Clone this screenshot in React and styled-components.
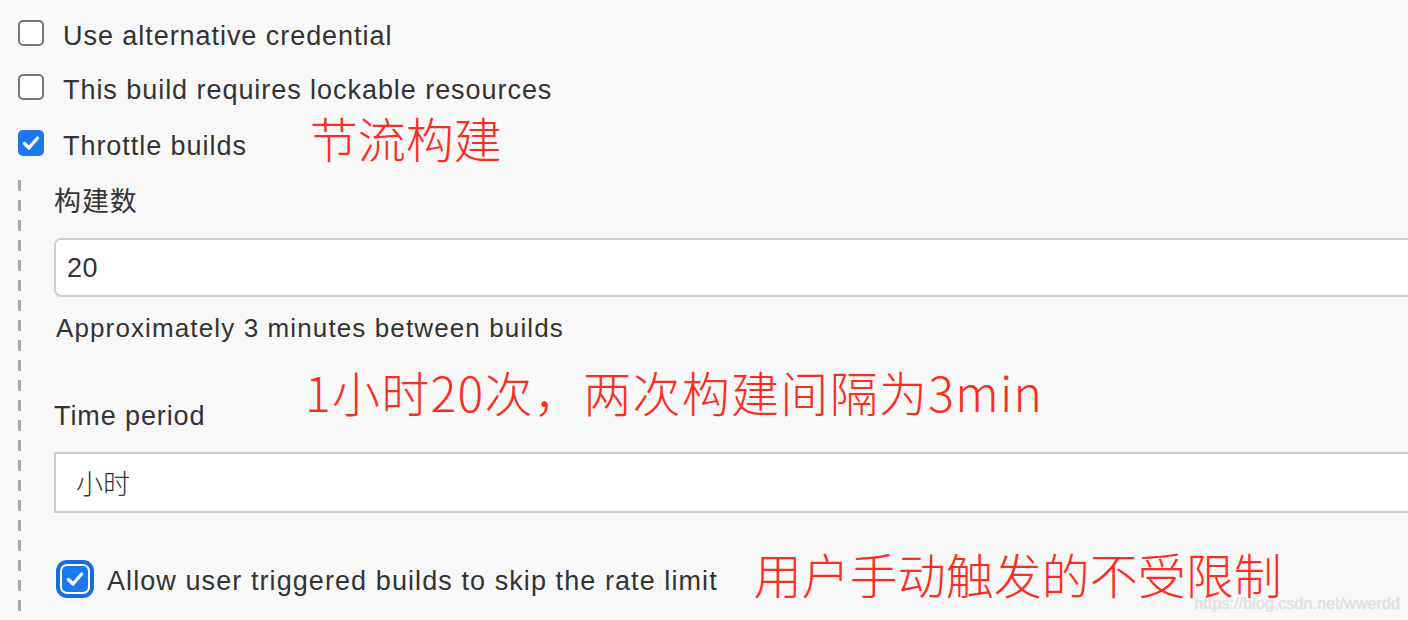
import styled, { createGlobalStyle } from 'styled-components'

const GlobalStyle = createGlobalStyle`
    html, body {
        margin: 0;
        padding: 0;
        background-color: #f8f8f8;
        overflow: hidden;
    }
    body {
        font-family: "Liberation Sans", "Noto Sans CJK SC", sans-serif;
        color: #333;
    }
`;

const Page = styled.div`
    position: relative;
    width: 1408px;
    height: 620px;
    padding: 20px 0 0 18px;
    box-sizing: border-box;
    overflow: hidden;
`;

const CheckList = styled.div`
    display: flex;
    flex-direction: column;
    gap: 28px;
`;

const CheckRow = styled.label`
    display: flex;
    align-items: center;
    gap: 19px;
    height: 26px;
    margin-top: ${props => props.$offset || 0}px;
    margin-left: ${props => props.$indent || 0}px;
    font-size: 27px;
    letter-spacing: ${props => props.$spacing || 0.95}px;
    line-height: 26px;
    white-space: nowrap;
`;

const RowText = styled.span`
    padding-top: ${props => props.$drop || 6}px;
`;

const Box = styled.span`
    flex: none;
    width: 26px;
    height: 26px;
    box-sizing: border-box;
    border-radius: 5px;
    border: 2px solid ${props => props.$checked ? '#1b78f2' : '#777'};
    background-color: ${props => props.$checked ? '#1b78f2' : '#fff'};
    display: flex;
    align-items: center;
    justify-content: center;
    box-shadow: ${props => props.$focus ? '0 0 0 2px #fff, 0 0 0 6px #1a6be0' : 'none'};

    svg {
        width: 20px;
        height: 20px;
    }
`;

const Note = styled.span`
    font-family: "Noto Sans CJK SC", sans-serif;
    font-weight: 300;
    font-size: 48px;
    line-height: 48px;
    letter-spacing: ${props => props.$spacing || 0}px;
    color: #fc2c1e;
    margin: -12px 0 0 ${props => props.$gap || 0}px;
    white-space: nowrap;
`;

const Nested = styled.div`
    margin-top: 24px;
    padding: 6px 0 40px 36px;
    background-image: linear-gradient(to bottom, #a9a9a9 0 11px, transparent 11px 20px);
    background-size: 3px 20px;
    background-repeat: repeat-y;
    background-position: 0 0;
`;

const Field = styled.div`
    position: relative;
    display: flex;
    flex-direction: column;
    margin-top: ${props => props.$top || 0}px;
`;

const Label = styled.div`
    font-size: 27px;
    letter-spacing: 0.9px;
    line-height: 32px;
    color: #333;
`;

const TextInput = styled.div`
    width: 1400px;
    height: 59px;
    margin-top: 20px;
    box-sizing: border-box;
    border: 2px solid #cfcfcf;
    border-radius: 7px;
    background-color: #fff;
    padding: 2px 0 0 11px;
    display: flex;
    align-items: center;
    font-size: 27px;
    letter-spacing: 0.5px;
`;

const Select = styled.div`
    width: 1400px;
    height: 61px;
    margin-top: 20px;
    box-sizing: border-box;
    border: 2px solid #cdcdcd;
    background-color: #fff;
    padding-left: 20px;
    display: flex;
    align-items: center;
    font-size: 27px;
    font-family: "Noto Sans CJK SC", sans-serif;
    font-weight: 300;
    color: #333;
`;

const Help = styled.div`
    margin-top: 15px;
    font-size: 26px;
    letter-spacing: 1.12px;
    line-height: 32px;
    margin-left: 2px;
`;

const FloatNote = styled(Note)`
    position: absolute;
    left: 251px;
    top: -33px;
    margin: 0;
`;

const Watermark = styled.div`
    position: absolute;
    right: 8px;
    bottom: 7px;
    font-size: 16px;
    color: #e2e2e2;
    text-shadow: 0 0 1px #d6d6d6;
    letter-spacing: 0.1px;
`;

const Tick = () => (
    <svg viewBox="0 0 20 20">
        <path d="M3.5 10.5 L8 15 L16.5 5" fill="none" stroke="#fff" strokeWidth="3.4" strokeLinecap="round" strokeLinejoin="round" />
    </svg>
)

const Check = ({ checked, focus }) => (
    <Box $checked={checked} $focus={focus}>
        {checked && <Tick />}
    </Box>
)

const App = () => {
    return (
        <>
            <GlobalStyle />
            <Page>
                <CheckList>
                    <CheckRow>
                        <Check />
                        <RowText>Use alternative credential</RowText>
                    </CheckRow>
                    <CheckRow>
                        <Check />
                        <RowText>This build requires lockable resources</RowText>
                    </CheckRow>
                    <CheckRow $offset={2}>
                        <Check checked />
                        <RowText>Throttle builds</RowText>
                        <Note $gap={44}>节流构建</Note>
                    </CheckRow>
                </CheckList>

                <Nested>
                    <Field>
                        <Label>构建数</Label>
                        <TextInput>20</TextInput>
                        <Help>Approximately 3 minutes between builds</Help>
                    </Field>

                    <Field $top={56}>
                        <Label>Time period</Label>
                        <FloatNote $spacing={1.3}>1小时20次，两次构建间隔为3min</FloatNote>
                        <Select>小时</Select>
                    </Field>

                    <CheckRow $offset={53} $indent={8} $spacing={1.08}>
                        <Check checked focus />
                        <RowText $drop={3}>Allow user triggered builds to skip the rate limit</RowText>
                        <Note $gap={17}>用户手动触发的不受限制</Note>
                    </CheckRow>
                </Nested>

                <Watermark>https://blog.csdn.net/wwerdd</Watermark>
            </Page>
        </>
    )
}

export default App
